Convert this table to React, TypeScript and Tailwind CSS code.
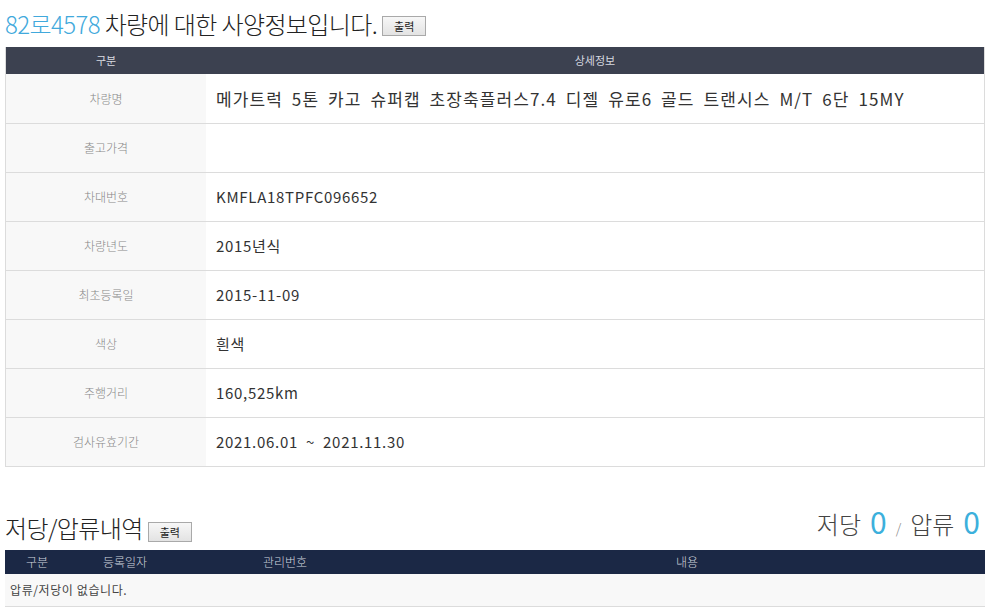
const font = "font-['Malgun_Gothic','Noto_Sans_CJK_KR',sans-serif]";

const specs: [string, string][] = [
  ["차량명", "메가트럭 5톤 카고 슈퍼캡 초장축플러스7.4 디젤 유로6 골드 트랜시스 M/T 6단 15MY"],
  ["출고가격", ""],
  ["차대번호", "KMFLA18TPFC096652"],
  ["차량년도", "2015년식"],
  ["최초등록일", "2015-11-09"],
  ["색상", "흰색"],
  ["주행거리", "160,525km"],
  ["검사유효기간", "2021.06.01 ~ 2021.11.30"],
];

function PrintButton() {
  return (
    <button className="h-[20px] w-[44px] border border-[#a9a9a9] bg-gradient-to-b from-[#f7f7f7] to-[#e3e3e3] text-[11px] leading-none text-[#222]">
      출력
    </button>
  );
}

export default function App() {
  return (
    <div className={`${font} h-[608px] w-[998px] overflow-hidden bg-white pl-[5px] pr-[13px] text-[#333]`}>
      <div className="flex items-end gap-[5px] pb-[8px] pt-[9px]">
        <h2 className="text-[24px] font-light leading-[30px] tracking-[-0.6px] text-[#222]">
          <span className="text-[#41a9dc]">82로4578</span> 차량에 대한 사양정보입니다.
        </h2>
        <div className="pb-[3px]">
          <PrintButton />
        </div>
      </div>

      <div className="border-x border-b border-[#dcdcdc]">
        <div className="flex h-[27px] items-center bg-[#3c4150] text-[11px] text-[#d8dae0]">
          <div className="w-[200px] text-center">구분</div>
          <div className="flex-1 text-center">상세정보</div>
        </div>
        {specs.map(([label, value], i) => (
          <div
            key={label}
            className={`flex h-[49px] ${i > 0 ? "border-t border-[#dcdcdc]" : ""}`}
          >
            <div className="flex w-[200px] items-center justify-center bg-[#f8f8f8] text-[12px] font-light text-[#888]">
              {label}
            </div>
            <div
              className={`flex flex-1 items-center pl-[10px] [word-spacing:4px] ${
                i === 0 ? "text-[17px] tracking-[1.1px]" : "text-[15px] tracking-[0.7px]"
              } text-[#333]`}
            >
              {value}
            </div>
          </div>
        ))}
      </div>

      <div className="mt-[39px] flex items-end justify-between pb-[7px] pr-[5px]">
        <div className="flex items-end gap-[5px]">
          <h3 className="text-[24px] font-light leading-[30px] tracking-[-0.6px] text-[#222]">저당/압류내역</h3>
          <div className="pb-[1px]">
            <PrintButton />
          </div>
        </div>
        <div className="flex items-baseline text-[24px] font-light leading-[30px] text-[#444]">
          <span>저당</span>
          <span className="ml-[9px] text-[30px] font-normal text-[#3cb0dc]">0</span>
          <span className="mx-[9px] text-[14px] text-[#888]">/</span>
          <span>압류</span>
          <span className="ml-[9px] text-[30px] font-normal text-[#3cb0dc]">0</span>
        </div>
      </div>

      <div className="border-b border-[#dcdcdc]">
        <div className="flex h-[24px] items-center bg-[#1b2845] text-[12px] font-light text-[#d0d4de]">
          <div className="w-[64px] text-center">구분</div>
          <div className="w-[112px] text-center">등록일자</div>
          <div className="w-[208px] text-center">관리번호</div>
          <div className="flex-1 text-center">내용</div>
        </div>
        <div className="flex h-[32px] items-center bg-[#f8f8f8] pl-[5px] text-[12px] tracking-[0.6px] text-[#444]">
          압류/저당이 없습니다.
        </div>
      </div>
    </div>
  );
}
